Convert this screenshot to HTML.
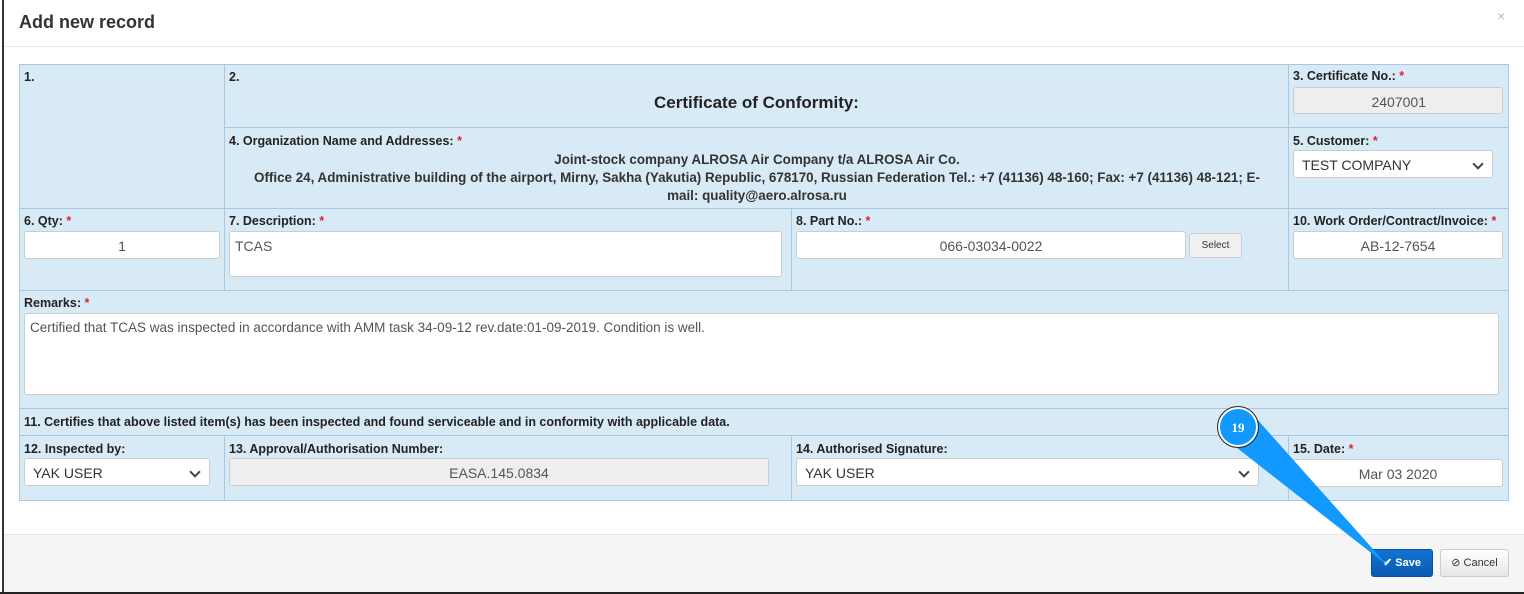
<!DOCTYPE html>
<html><head><style>
*{box-sizing:border-box;margin:0;padding:0}
body{width:1524px;height:594px;background:#fff;font-family:"Liberation Sans",Arial,sans-serif;font-size:12px;color:#222;position:relative;overflow:hidden}
.a{position:absolute}
.c{position:absolute;background:#d9eaf7;border:1px solid #a8c7e2}
.l{position:absolute;font-weight:bold;font-size:12.5px;color:#222}
.r{color:#d9232e}
.in{position:absolute;background:#fff;border:1px solid #ccc;border-radius:3px;font-size:14px;color:#555;padding:6px 8px}
.dis{background:#eee}
.ctr{text-align:center}
.sel::after{content:"";position:absolute;right:10px;top:9px;width:6px;height:6px;border-right:2px solid #444;border-bottom:2px solid #444;transform:rotate(45deg)}
</style></head><body>
<div class="a" style="left:2px;top:0;width:2px;height:594px;background:#333"></div>
<div class="a" style="left:4px;top:0;right:0;height:47px;border-bottom:1px solid #e5e5e5"></div>
<div class="a" style="left:19px;top:12px;font-size:18px;font-weight:bold;color:#333">Add new record</div>
<div class="a" style="left:1497px;top:8px;font-size:14px;color:#bbb">×</div>

<div class="c" style="left:19px;top:64px;width:206px;height:145px"></div>
<div class="c" style="left:224px;top:64px;width:1065px;height:64px"></div>
<div class="c" style="left:1288px;top:64px;width:221px;height:64px"></div>
<div class="c" style="left:224px;top:127px;width:1065px;height:82px"></div>
<div class="c" style="left:1288px;top:127px;width:221px;height:82px"></div>
<div class="c" style="left:19px;top:208px;width:206px;height:83px"></div>
<div class="c" style="left:224px;top:208px;width:568px;height:83px"></div>
<div class="c" style="left:791px;top:208px;width:498px;height:83px"></div>
<div class="c" style="left:1288px;top:208px;width:221px;height:83px"></div>
<div class="c" style="left:19px;top:290px;width:1490px;height:119px"></div>
<div class="c" style="left:19px;top:408px;width:1490px;height:28px"></div>
<div class="c" style="left:19px;top:435px;width:206px;height:66px"></div>
<div class="c" style="left:224px;top:435px;width:568px;height:66px"></div>
<div class="c" style="left:791px;top:435px;width:498px;height:66px"></div>
<div class="c" style="left:1288px;top:435px;width:221px;height:66px"></div>

<div class="l" style="left:24px;top:70px">1.</div>
<div class="l" style="left:229px;top:70px">2.</div>
<div class="a" style="left:224px;width:1065px;top:93px;text-align:center;font-weight:bold;font-size:17px">Certificate of Conformity:</div>
<div class="l" style="left:1293px;top:69px">3. Certificate No.: <span class="r">*</span></div>
<div class="in dis" style="left:1293px;top:87px;width:210px;height:27px;text-align:right;padding-right:76px">2407001</div>
<div class="l" style="left:229px;top:134px">4. Organization Name and Addresses: <span class="r">*</span></div>
<div class="a" style="left:228px;width:1058px;top:151px;text-align:center;font-weight:bold;font-size:13.4px;line-height:18px;color:#333;white-space:nowrap">Joint-stock company ALROSA Air Company t/a ALROSA Air Co.<br>Office 24, Administrative building of the airport, Mirny, Sakha (Yakutia) Republic, 678170, Russian Federation Tel.: +7 (41136) 48-160; Fax: +7 (41136) 48-121; E-<br>mail: quality@aero.alrosa.ru</div>
<div class="l" style="left:1293px;top:134px">5. Customer: <span class="r">*</span></div>
<div class="in sel" style="left:1293px;top:150px;width:200px;height:28px;color:#333">TEST COMPANY</div>

<div class="l" style="left:24px;top:214px">6. Qty: <span class="r">*</span></div>
<div class="in ctr" style="left:24px;top:231px;width:196px;height:28px">1</div>
<div class="l" style="left:229px;top:214px">7. Description: <span class="r">*</span></div>
<div class="in" style="left:229px;top:231px;width:553px;height:46px;padding-left:5px">TCAS</div>
<div class="l" style="left:796px;top:214px">8. Part No.: <span class="r">*</span></div>
<div class="in ctr" style="left:796px;top:231px;width:390px;height:28px">066-03034-0022</div>
<div class="in ctr" style="left:1189px;top:233px;width:53px;height:25px;background:#f0f0f0;font-size:10px;color:#333;padding:6px 0">Select</div>
<div class="l" style="left:1293px;top:214px">10. Work Order/Contract/Invoice: <span class="r">*</span></div>
<div class="in ctr" style="left:1293px;top:231px;width:210px;height:28px">AB-12-7654</div>

<div class="l" style="left:24px;top:296px">Remarks: <span class="r">*</span></div>
<div class="in" style="left:24px;top:313px;width:1475px;height:82px;font-size:13.5px;padding:6px 5px">Certified that TCAS was inspected in accordance with AMM task 34-09-12 rev.date:01-09-2019. Condition is well.</div>

<div class="l" style="left:24px;top:415px">11. Certifies that above listed item(s) has been inspected and found serviceable and in conformity with applicable data.</div>

<div class="l" style="left:24px;top:442px">12. Inspected by:</div>
<div class="in sel" style="left:24px;top:458px;width:186px;height:28px;color:#333">YAK USER</div>
<div class="l" style="left:229px;top:442px">13. Approval/Authorisation Number:</div>
<div class="in dis ctr" style="left:229px;top:458px;width:540px;height:28px">EASA.145.0834</div>
<div class="l" style="left:796px;top:442px">14. Authorised Signature:</div>
<div class="in sel" style="left:796px;top:458px;width:463px;height:28px;color:#333">YAK USER</div>
<div class="l" style="left:1293px;top:442px">15. Date: <span class="r">*</span></div>
<div class="in ctr" style="left:1293px;top:459px;width:210px;height:28px">Mar 03 2020</div>

<div class="a" style="left:4px;top:534px;width:1520px;height:58px;background:#f5f5f5;border-top:1px solid #e5e5e5"></div>
<div class="a" style="left:0;top:592px;width:1524px;height:2px;background:#222"></div>
<div class="a" style="left:1371px;top:549px;width:62px;height:28px;background:linear-gradient(#1173d4,#0a5bb0);border:1px solid #0a4f98;border-radius:3px;color:#fff;font-weight:bold;font-size:11px;text-align:center;line-height:26px">✔ Save</div>
<div class="a" style="left:1440px;top:549px;width:69px;height:28px;background:linear-gradient(#fff,#e6e6e6);border:1px solid #ccc;border-radius:3px;color:#333;font-size:11px;text-align:center;line-height:26px">⊘ Cancel</div>

<svg class="a" style="left:0;top:0" width="1524" height="594">
<polygon points="1232,444 1256,418 1388,566" fill="#1199ff"/>
<circle cx="1238" cy="427" r="19" fill="#1199ff" stroke="#fff" stroke-width="2"/>
<circle cx="1238" cy="427" r="20.5" fill="none" stroke="#222" stroke-width="1"/>
<text x="1238" y="432" text-anchor="middle" fill="#fff" font-family="Liberation Serif,serif" font-weight="bold" font-size="13">19</text>
</svg>
</body></html>
